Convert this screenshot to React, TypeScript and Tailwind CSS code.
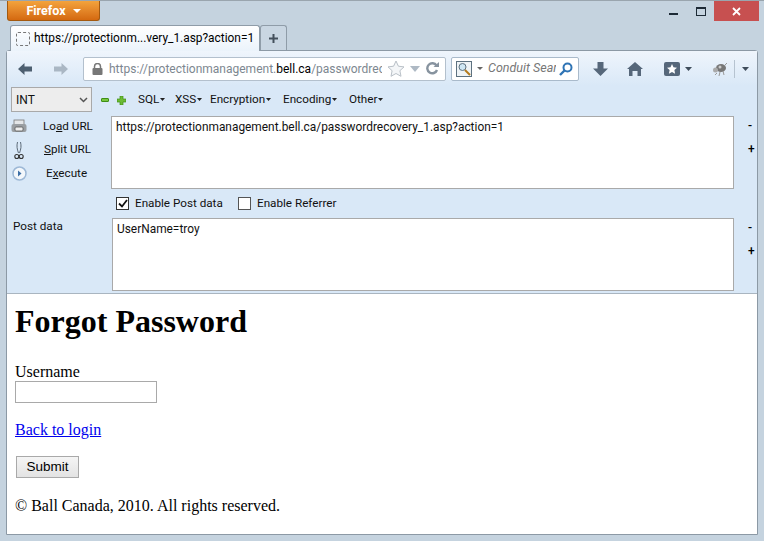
import React from 'react';

const ui = "font-['Roboto','Noto_Sans',sans-serif]";
const serif = "font-['Liberation_Serif','Times_New_Roman',serif]";

const Caret = ({ className = '' }: { className?: string }) => (
  <svg width="5" height="3" viewBox="0 0 5 3" className={className}>
    <path d="M0 0h5L2.5 3z" fill="#222" />
  </svg>
);

const MenuItem = ({ label, className }: { label: string; className: string }) => (
  <span className={`flex shrink-0 items-center gap-[1px] ${className}`}>
    {label}
    <Caret className="mt-[1px]" />
  </span>
);

const Row = ({ left, children }: { left: React.ReactNode; children: React.ReactNode }) => (
  <div className="flex">
    <div className="w-[105px] shrink-0">{left}</div>
    {children}
  </div>
);

const SideButton = ({ icon, label, className }: { icon: React.ReactNode; label: React.ReactNode; className: string }) => (
  <div className="flex h-[23px] items-center">
    <div className="flex w-[22px] justify-center">{icon}</div>
    <div className={className}>{label}</div>
  </div>
);

const Resizers = () => (
  <div className="mt-[2px] ml-[14px] flex flex-col text-[12px] font-medium text-black">
    <span className="h-[23px] leading-[17px]">-</span>
    <span className="h-[23px] leading-[17px]">+</span>
  </div>
);

export default function App() {
  return (
    <div className={`flex h-[541px] w-[764px] flex-col overflow-hidden border-t border-[#9aa5ae] bg-[#c5d3df] px-[6px] pb-[6px] ${ui}`}>
      {/* title bar */}
      <div className="flex h-[21px] shrink-0 items-start justify-between">
        <div className="ml-[1px] flex h-[20px] w-[93px] items-center justify-center gap-[7px] rounded-b-[3px] border border-t-0 border-[#a3590f] bg-gradient-to-b from-[#f3a33c] to-[#d4690f] pt-[1px] text-[12.5px] font-bold text-white">
          Firefox
          <svg width="8" height="4" viewBox="0 0 8 4">
            <path d="M0 0h8L4 4z" fill="#fff" />
          </svg>
        </div>
        <div className="-mr-[1px] flex items-start">
          <div className="mt-[12px] mr-[18px] h-[2px] w-[9px] bg-[#1d2a36]" />
          <div className="mt-[6px] mr-[8px] h-[9px] w-[10px] border border-t-2 border-[#1d2a36]" />
          <div className="flex h-[20px] w-[45px] items-center justify-center bg-[#c75050]">
            <svg width="9" height="9" viewBox="0 0 9 9">
              <path d="M1 1l7 7M8 1L1 8" stroke="#fff" strokeWidth="1.8" />
            </svg>
          </div>
        </div>
      </div>

      {/* tab strip */}
      <div className="mt-[3px] flex h-[25px] shrink-0 pl-[4px]">
        <div className="relative z-10 flex h-[26px] w-[250px] items-center gap-[4px] rounded-t-[3px] border border-b-0 border-[#8f9ca8] bg-gradient-to-b from-white to-[#ebf3fb] pl-[5px] text-[11.9px] text-black">
          <div className="h-[14px] w-[14px] shrink-0 rounded-[2px] border border-dashed border-[#777]" />
          <span className="whitespace-nowrap">https://protectionm...very_1.asp?action=1</span>
        </div>
        <div className="flex h-[25px] w-[27px] items-center justify-center rounded-t-[3px] border border-b-0 border-[#8f9ca8] bg-[#c9d6e2]">
          <svg width="11" height="11" viewBox="0 0 11 11">
            <path d="M5.5 1v9M1 5.5h9" stroke="#44505c" strokeWidth="2" />
          </svg>
        </div>
      </div>

      {/* browser frame */}
      <div className="flex min-h-0 flex-1 flex-col rounded-t-[3px] border border-[#8c99a5] bg-white">
        {/* nav bar */}
        <div className="flex h-[35px] shrink-0 items-center bg-gradient-to-b from-[#eff5fc] to-[#d9e8f7] pl-[11px]">
          <svg width="14" height="12" viewBox="0 0 14 12">
            <path d="M6.5 0v3.5H14v5H6.5V12L0 6z" fill="#4d5f70" />
          </svg>
          <svg width="14" height="12" viewBox="0 0 14 12" className="ml-[22px]">
            <path d="M7.5 0v3.5H0v5h7.500V12L14 6z" fill="#aab7c4" />
          </svg>
          <div className="ml-[15px] flex h-[24px] w-[363px] items-center rounded-[2px] border border-[#b3c0cd] bg-white pl-[8px] text-[12px] text-[#7d8790]">
            <svg width="11" height="12" viewBox="0 0 11 12" className="shrink-0">
              <path d="M2.5 5V3.5a3 3 0 0 1 6 0V5" fill="none" stroke="#777" strokeWidth="1.5" />
              <rect x="0.5" y="5" width="10" height="7" rx="1" fill="#777" />
            </svg>
            <span className="ml-[6px] w-[273px] shrink-0 overflow-hidden whitespace-nowrap">
              https://protectionmanagement.<span className="text-black">bell.ca</span>/passwordrecovery_1.asp
            </span>
            <svg width="18" height="17" viewBox="0 0 18 17" className="ml-[5px] shrink-0">
              <path d="M9 1l2.4 5.2 5.6.7-4.1 3.8 1.1 5.6L9 13.5l-5 2.8 1.1-5.6L1 6.9l5.6-.7z" fill="#f4f6f8" stroke="#b9c0c7" />
            </svg>
            <svg width="10" height="6" viewBox="0 0 10 6" className="ml-[5px] shrink-0">
              <path d="M0 0h10L5 6z" fill="#aeb9c4" />
            </svg>
            <svg width="13" height="13" viewBox="0 0 13 13" className="ml-[6px] shrink-0">
              <path d="M10.5 3.5A5 5 0 1 0 11 8" fill="none" stroke="#87939f" strokeWidth="2.4" />
              <path d="M7.5 5H13V0z" fill="#87939f" />
            </svg>
          </div>
          <div className="ml-[5px] flex h-[24px] w-[128px] items-center rounded-[2px] border border-[#a9bacb] bg-white pl-[4px] text-[12.5px] text-[#777]">
            <svg width="16" height="16" viewBox="0 0 16 16" className="shrink-0">
              <rect x="0.5" y="0.5" width="15" height="15" fill="#eef3f6" stroke="#5d7180" />
              <circle cx="6.5" cy="6" r="3.5" fill="#cfe7f4" stroke="#5d7180" />
              <path d="M9 9l5 5" stroke="#b47a1c" strokeWidth="2" />
            </svg>
            <svg width="6" height="3" viewBox="0 0 6 3" className="ml-[5px] shrink-0">
              <path d="M0 0h6L3 3z" fill="#666" />
            </svg>
            <span className="ml-[5px] w-[68px] shrink-0 overflow-hidden whitespace-nowrap italic">Conduit Search</span>
            <svg width="14" height="14" viewBox="0 0 14 14" className="ml-[3px] shrink-0">
              <circle cx="8.5" cy="5.5" r="4" fill="none" stroke="#2f74b5" strokeWidth="2" />
              <path d="M5.5 8.5L1 13" stroke="#2f74b5" strokeWidth="2.4" />
            </svg>
          </div>
          <svg width="15" height="14" viewBox="0 0 15 14" className="ml-[14px]">
            <path d="M4.5 0h6v6.5H15L7.5 14 0 6.5h4.5z" fill="#56677a" />
          </svg>
          <svg width="16" height="14" viewBox="0 0 16 14" className="ml-[19px]">
            <path d="M8 0l8 7h-2v7h-3.500V9h-5v5H2V7H0z" fill="#56677a" />
          </svg>
          <div className="ml-[21px] flex h-[14px] w-[16px] items-center justify-center rounded-[2px] bg-[#56677a]">
            <svg width="10" height="10" viewBox="0 0 10 10">
              <path d="M5 0l1.500 3.300 3.500.4-2.600 2.400.7 3.600L5 8 1.900 9.700l.7-3.600L0 3.700l3.500-.4z" fill="#fff" />
            </svg>
          </div>
          <svg width="7" height="4" viewBox="0 0 7 4" className="ml-[5px]">
            <path d="M0 0h7L3.500 4z" fill="#3f4d5b" />
          </svg>
          <svg width="16" height="14" viewBox="0 0 16 14" className="ml-[20px]">
            <ellipse cx="9" cy="6" rx="5" ry="4" fill="#777" />
            <circle cx="3.500" cy="8" r="2.500" fill="#aaa" />
            <circle cx="8" cy="5" r="1.500" fill="#ccc" />
            <path d="M5 11l-2 2M8 10l-1 4M11 9l1 4M13 3l2-2" stroke="#999" />
          </svg>
          <div className="ml-[6px] h-[18px] w-px bg-[#b6c3d0]" />
          <svg width="7" height="4" viewBox="0 0 7 4" className="ml-[7px]">
            <path d="M0 0h7L3.500 4z" fill="#3f4d5b" />
          </svg>
        </div>

        {/* hackbar */}
        <div className="flex shrink-0 flex-col bg-[#d9e8f7] text-[11.7px] text-[#111]">
          <div className="flex h-[30px] items-start pt-[1px] pl-[4px]">
            <div className="flex h-[25px] w-[81px] items-center justify-between border border-[#a9a9a9] bg-[#ededed] pr-[3px] pl-[4px] text-[12px]">
              INT
              <svg width="9" height="6" viewBox="0 0 9 6">
                <path d="M1 1l3.500 3.500L8 1" fill="none" stroke="#555" strokeWidth="1.500" />
              </svg>
            </div>
            <div className="mt-[11px] ml-[9px] h-[4px] w-[8px] rounded-[1px] border border-[#3f8f16] bg-[#79c640]" />
            <svg width="9" height="9" viewBox="0 0 9 9" className="mt-[9px] ml-[8px]">
              <path d="M3 0h3v3h3v3H6v3H3V6H0V3h3z" fill="#6cbb34" stroke="#3f8f16" strokeWidth="0.700" />
            </svg>
            <div className="flex h-[25px] items-center pl-[12px]">
              <MenuItem label="SQL" className="w-[37px]" />
              <MenuItem label="XSS" className="w-[35px]" />
              <MenuItem label="Encryption" className="w-[73px]" />
              <MenuItem label="Encoding" className="w-[66px]" />
              <MenuItem label="Other" className="w-[40px]" />
            </div>
          </div>

          <Row
            left={
              <div className="-mt-[1px] flex flex-col gap-[0.5px] pl-[1px]">
                <SideButton
                  className="ml-[13px]"
                  icon={
                    <svg width="16" height="15" viewBox="0 0 16 15">
                      <rect x="3" y="1" width="10" height="5" fill="#e4e6e8" stroke="#777" strokeWidth="0.800" />
                      <rect x="0.500" y="5" width="15" height="8" rx="2" fill="#9a9ea2" />
                      <rect x="4" y="8" width="8" height="4" rx="1" fill="#eee" stroke="#555" strokeWidth="0.800" />
                    </svg>
                  }
                  label={<>Lo<span className="underline">a</span>d URL</>}
                />
                <SideButton
                  className="ml-[14px]"
                  icon={
                    <svg width="10" height="19" viewBox="0 0 10 19">
                      <path d="M3.500 1C2.500 5 3 8 4.500 12M6.500 1C7.500 5 7 8 5.500 12" fill="#dbe6f0" stroke="#5c6b7a" />
                      <circle cx="2.800" cy="15.500" r="2" fill="none" stroke="#333" strokeWidth="1.100" />
                      <circle cx="7.200" cy="15.500" r="2" fill="none" stroke="#333" strokeWidth="1.100" />
                    </svg>
                  }
                  label={<><span className="underline">S</span>plit URL</>}
                />
                <SideButton
                  className="ml-[16px]"
                  icon={
                    <svg width="15" height="15" viewBox="0 0 15 15">
                      <circle cx="7.500" cy="7.500" r="6.500" fill="#f3f7fb" stroke="#9db8d6" strokeWidth="1.500" />
                      <path d="M6 4.500l3.500 3-3.500 3z" fill="#3d6fa6" />
                    </svg>
                  }
                  label={<>E<span className="underline">x</span>ecute</>}
                />
              </div>
            }
          >
            <div className="-ml-[1px] h-[73px] w-[623px] border border-[#a9a9a9] bg-white px-[4px] pt-[2px] text-[11.9px] leading-[17px]">
              https://protectionmanagement.bell.ca/passwordrecovery_1.asp?action=1
            </div>
            <Resizers />
          </Row>

          <div className="flex h-[29px] items-center pl-[109px]">
            <div className="flex h-[13px] w-[13px] items-center justify-center border border-[#333] bg-white">
              <svg width="10" height="9" viewBox="0 0 10 9">
                <path d="M1 4.500l3 3L9 1" fill="none" stroke="#111" strokeWidth="1.800" />
              </svg>
            </div>
            <span className="ml-[6px] w-[103px]">Enable Post data</span>
            <div className="h-[13px] w-[13px] border border-[#555] bg-white" />
            <span className="ml-[6px]">Enable Referrer</span>
          </div>

          <Row left={<div className="pl-[6px]">Post data</div>}>
            <div className="h-[73px] w-[622px] border border-[#a9a9a9] bg-white px-[4px] pt-[2px] text-[11.9px] leading-[17px]">
              UserName=troy
            </div>
            <Resizers />
          </Row>
        </div>
        <div className="h-[3px] shrink-0 border-b border-[#a9b5c0] bg-[#d9e8f7]" />

        {/* page content */}
        <div className={`flex-1 bg-white pl-[8px] text-[16px] text-black ${serif}`}>
          <h1 className="mt-[9px] text-[32px] leading-[37px] font-bold">Forgot Password</h1>
          <div className="mt-[23px] leading-[17px]">Username</div>
          <div className="mt-[1px] h-[22px] w-[142px] border border-[#a9a9a9] bg-white" />
          <a className="mt-[18px] block leading-[18px] text-[#0000ee] underline">Back to login</a>
          <button className="mt-[17px] ml-[1px] block h-[22px] w-[63px] border border-[#a9a9a9] bg-gradient-to-b from-[#f5f5f5] to-[#e3e3e3] font-['Liberation_Sans',Arial,sans-serif] text-[13.500px] text-black">
            Submit
          </button>
          <div className="mt-[19px] leading-[18px]">© Ball Canada, 2010. All rights reserved.</div>
        </div>
      </div>
    </div>
  );
}
